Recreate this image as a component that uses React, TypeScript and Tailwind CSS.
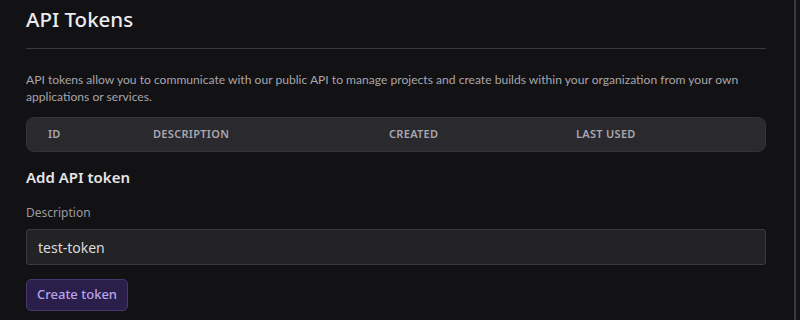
import React from "react";

export default function App() {
  return (
    <div
      className="flex w-[800px] h-[320px] bg-[#121114] overflow-hidden"
      style={{ fontFamily: '"Noto Sans", "Open Sans", sans-serif' }}
    >
      <div className="w-[794px] pl-[26px] pr-[28px] flex flex-col">
        <h1 className="text-[20.5px] leading-[28px] mt-[5px] font-medium text-[#ececee]">API Tokens</h1>
        <div className="h-px bg-[#3a393d] mt-[15px]" />
        <p
          className="text-[12.1px] leading-[17px] text-[#a8a6ab] mt-[22px]"
          style={{ fontFamily: 'Lato, "Noto Sans", sans-serif' }}
        >
          API tokens allow you to communicate with our public API to manage projects and create builds within your organization from your own applications or services.
        </p>
        <div className="mt-[12px] h-[35px] rounded-[8px] bg-[#2a292d] border border-[#343337] flex items-center pl-[21px] text-[11px] font-semibold tracking-[0.3px] text-[#a9a7ad] uppercase">
          <div className="w-[105px]">ID</div>
          <div className="w-[236px]">Description</div>
          <div className="w-[187px]">Created</div>
          <div>Last used</div>
        </div>
        <h2 className="text-[15px] leading-[20px] font-semibold text-[#e6e5e8] mt-[15px]">Add API token</h2>
        <label className="text-[12px] leading-[16px] text-[#9c9aa0] mt-[18px]">Description</label>
        <div className="mt-[8px] h-[36px] bg-[#232225] border border-[#3b3a3e] rounded-[3px] flex items-center pl-[11px] text-[14px] text-[#dcdbde]">
          test-token
        </div>
        <div className="mt-[14px]">
          <button className="h-[32px] px-[10px] rounded-[5px] bg-[#2a1f4a] border border-[#45386e] text-[13px] font-medium text-[#b8a4ec]">
            Create token
          </button>
        </div>
      </div>
      <div className="w-[2px] bg-[#3a393c]" />
      <div className="flex-1 bg-[#141316]" />
    </div>
  );
}
